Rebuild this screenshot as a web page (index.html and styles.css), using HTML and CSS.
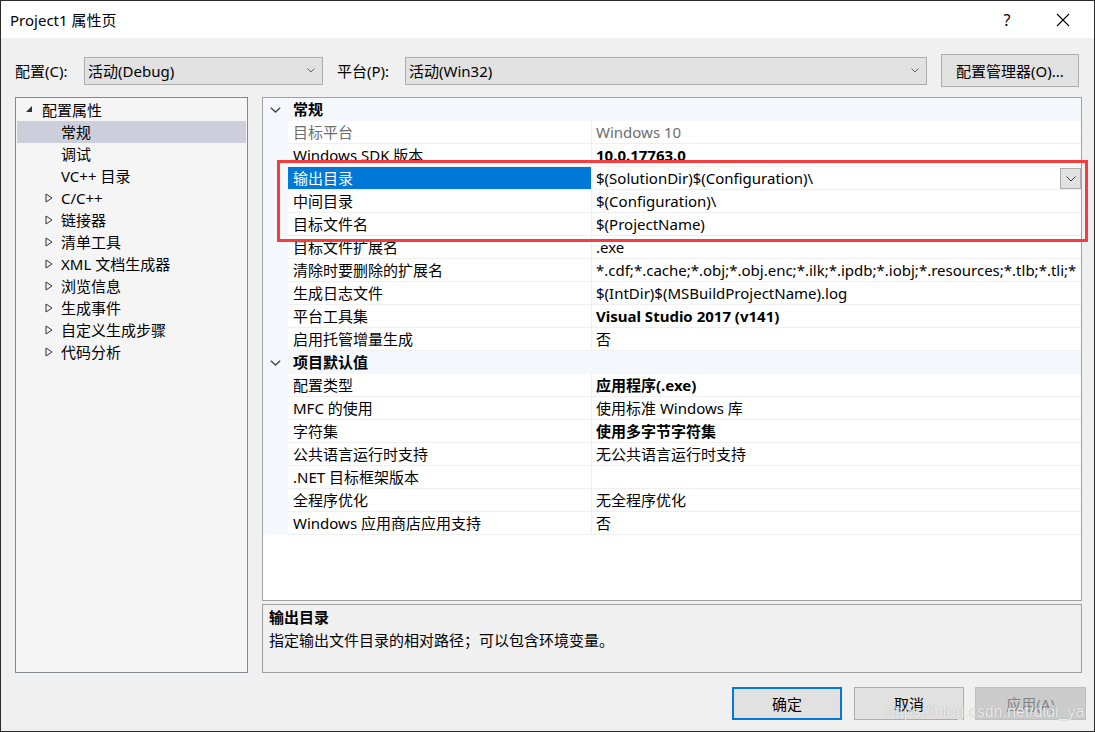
FILE: index.html
```html
<!DOCTYPE html>
<html lang="zh-CN">
  <head>
    <meta charset="UTF-8" />
    <meta name="viewport" content="width=device-width, initial-scale=1.0" />
    <title>Project1 属性页</title>
    <link rel="stylesheet" href="styles.css">
  </head>
  <body>
    <div class="window">
      <div class="titlebar">
        <span class="title">Project1 属性页</span>
        <span class="help">?</span>
        <span class="close">
          <svg width="14" height="14" viewBox="0 0 14 14"><path d="M1 1 L13 13 M13 1 L1 13" stroke="#000" stroke-width="1.1" fill="none"/></svg>
        </span>
      </div>

      <div class="toolbar">
        <span class="label label-config">配置(C):</span>
        <div class="combo combo-config">
          <span>活动(Debug)</span>
          <svg class="chev" width="8" height="5" viewBox="0 0 8 5"><path d="M0.5 0.5 L4 4 L7.5 0.5" stroke="#606060" fill="none"/></svg>
        </div>
        <span class="label label-platform">平台(P):</span>
        <div class="combo combo-platform">
          <span>活动(Win32)</span>
          <svg class="chev" width="8" height="5" viewBox="0 0 8 5"><path d="M0.5 0.5 L4 4 L7.5 0.5" stroke="#606060" fill="none"/></svg>
        </div>
        <button class="btn btn-manager">配置管理器(O)...</button>
      </div>

      <div class="main">
        <div class="tree">
          <div class="node root">
            <span class="arrow"><svg width="8" height="8" viewBox="0 0 8 8"><polygon points="7,1 7,7 1,7" fill="#333"/></svg></span>
            <span>配置属性</span>
          </div>
          <div class="node child selected"><span class="arrow"></span><span>常规</span></div>
          <div class="node child"><span class="arrow"></span><span>调试</span></div>
          <div class="node child"><span class="arrow"></span><span>VC++ 目录</span></div>
          <div class="node child"><span class="arrow"><svg width="8" height="10" viewBox="0 0 8 10"><polygon points="1,1 7,5 1,9" fill="none" stroke="#333"/></svg></span><span>C/C++</span></div>
          <div class="node child"><span class="arrow"><svg width="8" height="10" viewBox="0 0 8 10"><polygon points="1,1 7,5 1,9" fill="none" stroke="#333"/></svg></span><span>链接器</span></div>
          <div class="node child"><span class="arrow"><svg width="8" height="10" viewBox="0 0 8 10"><polygon points="1,1 7,5 1,9" fill="none" stroke="#333"/></svg></span><span>清单工具</span></div>
          <div class="node child"><span class="arrow"><svg width="8" height="10" viewBox="0 0 8 10"><polygon points="1,1 7,5 1,9" fill="none" stroke="#333"/></svg></span><span>XML 文档生成器</span></div>
          <div class="node child"><span class="arrow"><svg width="8" height="10" viewBox="0 0 8 10"><polygon points="1,1 7,5 1,9" fill="none" stroke="#333"/></svg></span><span>浏览信息</span></div>
          <div class="node child"><span class="arrow"><svg width="8" height="10" viewBox="0 0 8 10"><polygon points="1,1 7,5 1,9" fill="none" stroke="#333"/></svg></span><span>生成事件</span></div>
          <div class="node child"><span class="arrow"><svg width="8" height="10" viewBox="0 0 8 10"><polygon points="1,1 7,5 1,9" fill="none" stroke="#333"/></svg></span><span>自定义生成步骤</span></div>
          <div class="node child"><span class="arrow"><svg width="8" height="10" viewBox="0 0 8 10"><polygon points="1,1 7,5 1,9" fill="none" stroke="#333"/></svg></span><span>代码分析</span></div>
        </div>

        <div class="right">
          <div class="grid">
            <div class="cat">
              <span class="gutter"><svg width="11" height="6" viewBox="0 0 11 6"><path d="M0.8 0.8 L5.5 5 L10.2 0.8" stroke="#444" stroke-width="1.4" fill="none"/></svg></span>
              <span class="cat-name">常规</span>
            </div>
            <div class="row disabled"><span class="gutter"></span><span class="name">目标平台</span><span class="value">Windows 10</span></div>
            <div class="row"><span class="gutter"></span><span class="name">Windows SDK 版本</span><span class="value bold">10.0.17763.0</span></div>
            <div class="row"><span class="gutter"></span><span class="name sel">输出目录</span>
              <span class="value"><span>$(SolutionDir)$(Configuration)\</span>
                <span class="drop"><svg width="10" height="6" viewBox="0 0 10 6"><path d="M0.5 0.5 L5 5 L9.5 0.5" stroke="#404040" fill="none"/></svg></span>
              </span>
            </div>
            <div class="row"><span class="gutter"></span><span class="name">中间目录</span><span class="value">$(Configuration)\</span></div>
            <div class="row"><span class="gutter"></span><span class="name">目标文件名</span><span class="value">$(ProjectName)</span></div>
            <div class="row"><span class="gutter"></span><span class="name">目标文件扩展名</span><span class="value">.exe</span></div>
            <div class="row"><span class="gutter"></span><span class="name">清除时要删除的扩展名</span><span class="value">*.cdf;*.cache;*.obj;*.obj.enc;*.ilk;*.ipdb;*.iobj;*.resources;*.tlb;*.tli;*</span></div>
            <div class="row"><span class="gutter"></span><span class="name">生成日志文件</span><span class="value">$(IntDir)$(MSBuildProjectName).log</span></div>
            <div class="row"><span class="gutter"></span><span class="name">平台工具集</span><span class="value bold">Visual Studio 2017 (v141)</span></div>
            <div class="row"><span class="gutter"></span><span class="name">启用托管增量生成</span><span class="value">否</span></div>
            <div class="cat">
              <span class="gutter"><svg width="11" height="6" viewBox="0 0 11 6"><path d="M0.8 0.8 L5.5 5 L10.2 0.8" stroke="#444" stroke-width="1.4" fill="none"/></svg></span>
              <span class="cat-name">项目默认值</span>
            </div>
            <div class="row"><span class="gutter"></span><span class="name">配置类型</span><span class="value bold">应用程序(.exe)</span></div>
            <div class="row"><span class="gutter"></span><span class="name">MFC 的使用</span><span class="value">使用标准 Windows 库</span></div>
            <div class="row"><span class="gutter"></span><span class="name">字符集</span><span class="value bold">使用多字节字符集</span></div>
            <div class="row"><span class="gutter"></span><span class="name">公共语言运行时支持</span><span class="value">无公共语言运行时支持</span></div>
            <div class="row"><span class="gutter"></span><span class="name">.NET 目标框架版本</span><span class="value"></span></div>
            <div class="row"><span class="gutter"></span><span class="name">全程序优化</span><span class="value">无全程序优化</span></div>
            <div class="row"><span class="gutter"></span><span class="name">Windows 应用商店应用支持</span><span class="value">否</span></div>
          </div>
          <div class="desc">
            <div class="desc-title">输出目录</div>
            <div class="desc-text">指定输出文件目录的相对路径；可以包含环境变量。</div>
          </div>
        </div>
      </div>

      <div class="footer">
        <button class="btn btn-ok">确定</button>
        <button class="btn btn-cancel">取消</button>
        <button class="btn btn-apply" disabled>应用(A)</button>
      </div>

      <div class="highlight"></div>
      <div class="watermark">https://blog.csdn.net/didi_ya</div>
    </div>
  </body>
</html>
```

FILE: styles.css
```css
body {
  margin: 0;
  background-color: #f0f0f0;
}
.window {
  position: relative;
  width: 1095px;
  height: 732px;
  box-sizing: border-box;
  border: 1px solid #2b2b2b;
  background-color: #f0f0f0;
  font-family: "Noto Sans", "Noto Sans CJK SC", sans-serif;
  font-size: 15px;
  color: #000;
  display: flex;
  flex-direction: column;
  overflow: hidden;
}
.titlebar {
  height: 37px;
  flex: none;
  background-color: #fff;
  display: flex;
  align-items: center;
  padding-left: 9px;
  padding-right: 8px;
}
.title {
  font-size: 15px;
}
.help {
  margin-left: auto;
  width: 46px;
  text-align: center;
  font-size: 16px;
}
.close {
  width: 46px;
  margin-left: 10px;
  display: flex;
  justify-content: center;
}
.toolbar {
  display: flex;
  align-items: center;
  padding: 16px 14px 0 14px;
  height: 33px;
  flex: none;
}
.label-config {
  width: 69px;
}
.label-platform {
  width: 68px;
  margin-left: 14px;
}
.combo {
  height: 28px;
  box-sizing: border-box;
  border: 1px solid #adadad;
  background-color: #e1e1e1;
  display: flex;
  align-items: center;
  justify-content: space-between;
  padding: 0 7px 0 3px;
}
.combo-config {
  width: 239px;
}
.combo-platform {
  width: 522px;
}
.btn {
  font-family: "Noto Sans", "Noto Sans CJK SC", sans-serif;
  font-size: 15px;
  color: #000;
  background-color: #e1e1e1;
  border: 1px solid #adadad;
  box-sizing: border-box;
  padding: 0;
  margin: 0;
}
.btn-manager {
  width: 138px;
  height: 33px;
  margin-left: 14px;
}
.main {
  display: flex;
  margin-top: 10px;
  padding: 0 12px 0 14px;
  gap: 14px;
  height: 576px;
  flex: none;
}
.tree {
  width: 233px;
  box-sizing: border-box;
  border: 1px solid #828790;
  background-color: #f5f5f5;
  padding: 1px;
}
.node {
  height: 22px;
  line-height: 22px;
  display: flex;
  align-items: center;
  white-space: nowrap;
}
.node .arrow {
  display: flex;
  align-items: center;
}
.root {
  padding-left: 8px;
}
.root .arrow {
  width: 17px;
  padding-bottom: 2px;
}
.child {
  padding-left: 28px;
}
.child .arrow {
  width: 16px;
}
.selected {
  background-color: #cccedb;
}
.right {
  width: 820px;
  display: flex;
  flex-direction: column;
}
.grid {
  height: 504px;
  box-sizing: border-box;
  border: 1px solid #a0a0a0;
  background-color: #fff;
  overflow: hidden;
}
.row,
.cat {
  display: flex;
  height: 23px;
  line-height: 22px;
}
.cat {
  background-color: #f4f7fb;
}
.gutter {
  width: 25px;
  flex: none;
  background-color: #f4f7fb;
  display: flex;
  align-items: center;
  justify-content: center;
  padding-right: 1px;
  box-sizing: border-box;
}
.cat-name {
  font-weight: bold;
  padding-left: 5px;
}
.name {
  width: 304px;
  flex: none;
  box-sizing: border-box;
  padding-left: 5px;
  border-right: 1px solid #f0f0f0;
  border-bottom: 1px solid #f0f0f0;
  white-space: nowrap;
}
.name.sel {
  background-color: #0078d7;
  color: #fff;
}
.value {
  flex: 1;
  min-width: 0;
  padding-left: 4px;
  border-bottom: 1px solid #f0f0f0;
  white-space: nowrap;
  overflow: hidden;
  display: flex;
}
.bold {
  font-weight: bold;
}
.disabled .name,
.disabled .value {
  color: #6d6d6d;
}
.drop {
  margin-left: auto;
  margin-top: 1px;
  width: 21px;
  height: 21px;
  box-sizing: border-box;
  border: 1px solid #adadad;
  background-color: #e1e1e1;
  display: flex;
  align-items: center;
  justify-content: center;
}
.desc {
  margin-top: 3px;
  height: 69px;
  box-sizing: border-box;
  border: 1px solid #a0a0a0;
  background-color: #f0f0f0;
  padding: 1px 6px 0 6px;
}
.desc-title {
  font-weight: bold;
  line-height: 23px;
}
.desc-text {
  line-height: 23px;
}
.footer {
  display: flex;
  justify-content: flex-end;
  margin-top: 14px;
  padding-right: 8px;
}
.btn-ok,
.btn-cancel,
.btn-apply {
  width: 110px;
  height: 33px;
}
.btn-ok {
  border: 2px solid #0078d7;
}
.btn-cancel {
  margin-left: 12px;
}
.btn-apply {
  width: 111px;
  margin-left: 11px;
  background-color: #cccccc;
  border-color: #bfbfbf;
  color: #838383;
}
.highlight {
  position: absolute;
  left: 276px;
  top: 159px;
  width: 811px;
  height: 82px;
  box-sizing: border-box;
  border: 3px solid #f63c3c;
  pointer-events: none;
}
.watermark {
  position: absolute;
  left: 885px;
  top: 701px;
  font-family: "Liberation Sans", Arial, sans-serif;
  font-size: 16px;
  line-height: 20px;
  color: rgba(255, 255, 255, 0.85);
  text-shadow: 0 0 1px rgba(0, 0, 0, 0.35);
}
```
